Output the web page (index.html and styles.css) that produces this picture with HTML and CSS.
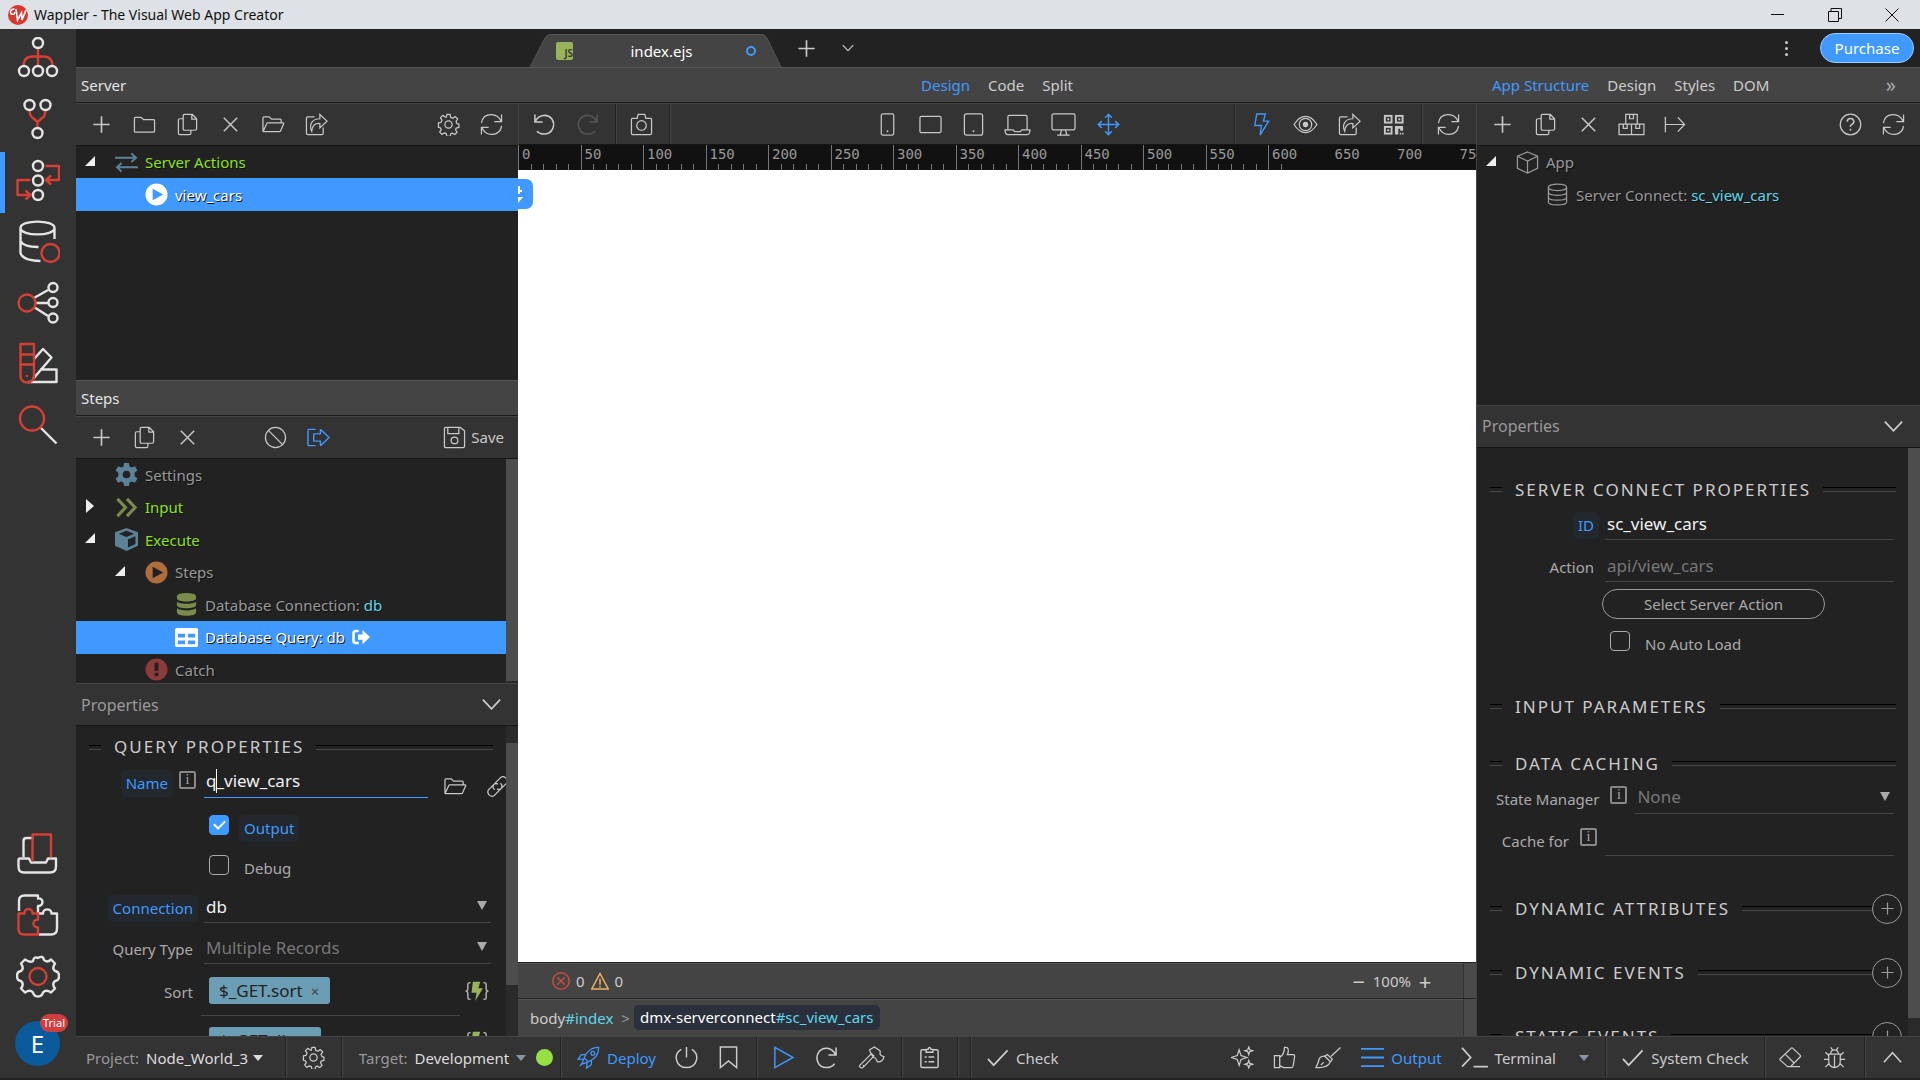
FILE: index.html
```html
<!DOCTYPE html>
<html lang="en">
<head>
<meta charset="utf-8">
<title>Wappler - The Visual Web App Creator</title>
<link rel="stylesheet" href="styles.css">
</head>
<body>
<svg class="defs" aria-hidden="true">
  <symbol id="plus" viewBox="0 0 24 24"><path d="M12 3.500v17M3.500 12h17" stroke-width="1.700"/></symbol>
  <symbol id="x" viewBox="0 0 24 24"><path d="M5 5l14 14M19 5L5 19" stroke-width="1.500"/></symbol>
  <symbol id="folder" viewBox="0 0 24 24"><path d="M1.500 19V5.500q0-1 1-1h6l2.500 2.500h10.500q1 0 1 1v11q0 1-1 1h-19q-1 0-1-1z"/></symbol>
  <symbol id="copy" viewBox="0 0 24 24"><path d="M9 1.500h8l4.500 4.500v10.500q0 1.500-1.500 1.500H9q-1.500 0-1.500-1.500V3Q7.500 1.500 9 1.500zM16.500 1.500v5h5M7.500 6H4Q2.500 6 2.500 7.500v13.500Q2.500 22.500 4 22.500h10q1.500 0 1.500-1.500v-3"/></symbol>
  <symbol id="open" viewBox="0 0 24 24"><path d="M1 19.500V5q0-1 1-1h5.500l2.500 2.500h9q1 0 1 1v3M1 19.500L5 11q.3-.7 1-.7h16q1 0 .6 1l-3.300 7.500q-.3.700-1.300.7H1"/></symbol>
  <symbol id="share" viewBox="0 0 24 24"><path d="M10 4H3Q1.500 4 1.500 5.500v15.500Q1.500 22.500 3 22.500h14.500q1.500 0 1.500-1.500v-6M15.500 1.500l7.500 7-7.500 7v-4.500c-5-.5-8 2-8.500 8C3.500 11.500 8 6 15.500 6z"/></symbol>
  <symbol id="gear" viewBox="0 0 24 24"><circle cx="12" cy="12" r="3.800"/><path d="M9.700 4.500L10.300 1.500h3.400l.6 3 2.300 1 2.600-1.700 2.400 2.400-1.700 2.600 1 2.300 2 .6v3.400l-3 .6-.5 1.800 1.500 2.700-2.400 2.300-2.600-1.500-1.600.7-.6 2.800h-3.400l-.6-3-1.900-.8-2.700 1.600-2.300-2.400 1.600-2.600-.8-1.900-2.100-.5V10.300l2.700-.6 1-2.200-1.600-2.700 2.400-2.300 2.700 1.700z" stroke-linejoin="round"/></symbol>
  <symbol id="sync" viewBox="0 0 24 24"><path d="M1.500 10.500C3 -.5 17.500-1.500 22 8.500M22.500 1.500v7.500H15M22.500 13.500C21 24.500 6.500 25.500 2 15.500M1.500 22.500V15H9"/></symbol>
  <symbol id="undo" viewBox="0 0 24 24"><path d="M2 1.500v8h8M2.200 9C6 1.500 15 .5 19.500 6c4.500 6 1 16-8 16-3 0-5.500-1-7.500-3" stroke-width="1.600"/></symbol>
  <symbol id="redo" viewBox="0 0 24 24"><path d="M22 1.500v8h-8M21.800 9C18 1.500 9 .5 4.500 6c-4.500 6-1 16 8 16 3 0 5.500-1 7.500-3" stroke-width="1.600"/></symbol>
  <symbol id="camera" viewBox="0 0 24 24"><path d="M2.500 5.500h5l1-4h7l1 4h5q1 0 1 1V21q0 1.500-1.500 1.500H3q-1.500 0-1.500-1.500V6.500q0-1 1-1z"/><circle cx="12" cy="13" r="5"/></symbol>
  <symbol id="phone" viewBox="0 0 24 24"><rect x="5.500" y="1" width="13" height="22" rx="1.500"/><circle cx="12" cy="19" r="1" class="dot"/></symbol>
  <symbol id="landscape" viewBox="0 0 24 24"><rect x="1" y="3.500" width="22" height="17" rx="1.500"/></symbol>
  <symbol id="tablet" viewBox="0 0 24 24"><rect x="2.500" y="1" width="19" height="22" rx="2"/><circle cx="12" cy="19" r="1" class="dot"/></symbol>
  <symbol id="laptop" viewBox="0 0 28 24"><path d="M4 17V4q0-1.500 1.500-1.500h17Q24 2.500 24 4v13M1 17.500h8.500l1.500 2h6l1.500-2H27q0 5-3 5H4q-3 0-3-5z"/></symbol>
  <symbol id="monitor" viewBox="0 0 26 24"><rect x="1" y="1" width="24" height="16.500" rx="1.500"/><path d="M11 17.500L9.500 23M15 17.500l1.500 5.500M6.500 23h13"/></symbol>
  <symbol id="move" viewBox="0 0 24 24"><path d="M12 1.500v21M1.500 12h21M8.500 5L12 1.300 15.500 5M8.500 19l3.500 3.700 3.500-3.700M5 8.500L1.300 12 5 15.500M19 8.500l3.700 3.500-3.700 3.500" stroke-width="1.500"/></symbol>
  <symbol id="bolt" viewBox="0 0 24 24"><path d="M7 1h9l-2 7.500h5.500L10.500 23l1.500-10H5z" stroke-width="1.400"/></symbol>
  <symbol id="eye" viewBox="0 0 26 24"><path d="M1 12Q6.500 3.500 13 3.500T25 12q-5.500 8.500-12 8.500T1 12z"/><circle cx="13" cy="12" r="6.500"/><circle cx="13" cy="12" r="2.800" class="dot"/></symbol>
  <symbol id="qr" viewBox="0 0 24 24"><g stroke-width="2"><rect x="3" y="3" width="7" height="7"/><rect x="14.500" y="3" width="7" height="7"/><rect x="3" y="14.500" width="7" height="7"/></g><path d="M6.500 5.500v2M18 5.500v2M6.500 17v2" stroke-width="2"/><path class="dot" d="M13.500 13.500h8.500v5h-3v-2h-2v6h-3.500zM18.500 20.500h1.500v2h-1.500zM21 20.500h1.500v2H21z"/></symbol>
  <symbol id="boxes" viewBox="0 0 28 24"><path d="M8 1.500h12v10H8zM1 11.500h26v11H1zM14 11.500v11M12 1.500v4.500h4V1.500M5.500 11.500V16h4v-4.500M18.500 11.500V16h4v-4.500"/></symbol>
  <symbol id="into" viewBox="0 0 24 24"><path d="M2.500 4v16M3 12h19M15.500 4.500L22.500 12l-7 7.500"/></symbol>
  <symbol id="help" viewBox="0 0 24 24"><circle cx="12" cy="12" r="10.700"/><path d="M8.500 9q.3-3.300 3.500-3.300T15.500 9q0 1.700-2 2.800T12 14.500" stroke-width="1.600"/><circle cx="12" cy="17.500" r="1" class="dot"/></symbol>
  <symbol id="ban" viewBox="0 0 24 24"><circle cx="12" cy="12" r="10.500"/><path d="M4.600 4.600l14.800 14.800"/></symbol>
  <symbol id="exit" viewBox="0 0 24 24"><path d="M9 3.500H2q-1 0-1 1v15q0 1 1 1h7M7 9q0-.8.800-.8H14V4.500q0-1 .8-.4L23 12l-8.200 8q-.8.600-.8-.4v-3.800H7.800Q7 15.800 7 15z" stroke-width="1.500"/></symbol>
  <symbol id="save" viewBox="0 0 24 24"><path d="M3 1.500h15L22.500 5v16q0 1.500-1.500 1.500H3Q1.500 22.500 1.500 21V3Q1.500 1.500 3 1.500zM5 1.500V8h11.500V1.500"/><circle cx="12" cy="15" r="3.500"/></symbol>
  <symbol id="swap" viewBox="0 0 24 24"><path d="M0 7h21M17 2.500L22 7l-5 4.500M24 17H3M7 12.500L2 17l5 4.500" stroke-width="2"/></symbol>
  <symbol id="play-disc" viewBox="0 0 24 24"><path class="solid" fill-rule="evenodd" d="M12 .5a11.500 11.500 0 100 23 11.500 11.500 0 000-23zM8 6l11 6-11 6z"/></symbol>
  <symbol id="gear-solid" viewBox="0 0 24 24"><path class="solid" fill-rule="evenodd" d="M9.500 0h5l.7 3.600 2.200 1.200 3.400-1.300 2.600 4.300-2.900 2.400v3.600l2.900 2.400-2.600 4.300-3.400-1.300-2.200 1.200-.7 3.600h-5l-.7-3.600-2.200-1.200-3.400 1.300L.6 16.200l2.900-2.400v-3.600L.6 7.800l2.600-4.300 3.400 1.300 2.200-1.200zM12 8a4 4 0 100 8 4 4 0 000-8z"/></symbol>
  <symbol id="chevrons" viewBox="0 0 24 24"><path d="M2.500 3l8.500 9-8.500 9M12.500 3l8.500 9-8.500 9" stroke-width="3.200"/></symbol>
  <symbol id="cube-solid" viewBox="0 0 24 24"><path class="solid" fill-rule="evenodd" d="M12 0l12 4.500v14L12 24 0 18.500v-14zM12 2.800L4 6l8 3.300L20 6zM13.500 12v8.300l7.800-3.500V8.700z"/></symbol>
  <symbol id="db-solid" viewBox="0 0 24 24"><path class="solid" d="M2 3.500C2-1 22-1 22 3.500v2C22 10 2 10 2 5.500zM2 9c4 3 16 3 20 0v3.500c0 4.500-20 4.500-20 0zM2 16c4 3 16 3 20 0v4c0 5-20 5-20 0z"/></symbol>
  <symbol id="table" viewBox="0 0 24 24"><path class="solid" fill-rule="evenodd" d="M2 2h20q2 0 2 2v16q0 2-2 2H2q-2 0-2-2V4q0-2 2-2zM3 8v4h7.500V8zM13.500 8v4H21V8zM3 15v4h7.500v-4zM13.500 15v4H21v-4z"/></symbol>
  <symbol id="alert" viewBox="0 0 24 24"><path class="solid" fill-rule="evenodd" d="M12 .5a11.500 11.500 0 100 23 11.500 11.500 0 000-23zM10 5h4v8.500h-4zM10 15.500h4v3.500h-4z"/></symbol>
  <symbol id="out-solid" viewBox="0 0 24 24"><path d="M9 4H5Q2 4 2 7v10q0 3 3 3h4" stroke-width="3.500"/><path class="solid" d="M8 8.500h6V2.500L24 12l-10 9.500v-6H8z"/></symbol>
  <symbol id="cube" viewBox="0 0 24 24"><path d="M12 1l10.500 4.500v12.500L12 23 1.500 18V5.500zM1.500 5.500L12 10.500l10.500-5M12 10.500V23"/></symbol>
  <symbol id="db" viewBox="0 0 24 24"><path d="M2.500 4.500C2.500 0 21.500 0 21.500 4.500S2.500 9 2.500 4.500v15C2.500 24 21.500 24 21.500 19.500v-15M2.500 9.500C2.500 14 21.500 14 21.500 9.500M2.500 14.500c0 4.500 19 4.500 19 0"/></symbol>
  <symbol id="chev-down" viewBox="0 0 24 24"><path d="M3 7l9 9.500L21 7" stroke-width="1.800"/></symbol>
  <symbol id="chev-up" viewBox="0 0 24 24"><path d="M3 17l9-10 9 10" stroke-width="1.600"/></symbol>
  <symbol id="link" viewBox="0 0 24 24"><path d="M9 15.500c-2.500-2-2-4.500 0-6.500L15 3q2.500-2.500 5.500 0 3 3 .5 6l-5 5q-2 2-4.500.5M15 8.500c2.500 2 2 4.500 0 6.500l-6 6q-2.500 2.500-5.500 0-3-3-.5-6l5-5q2-2 4.500-.5"/></symbol>
  <symbol id="brace-bolt" viewBox="0 0 28 24"><path d="M7 3H5.500Q4 3 4 5v4.500Q4 12 1.500 12 4 12 4 14.500V19q0 2 1.500 2H7M21 3h1.500Q24 3 24 5v4.500q0 2.500 2.500 2.500Q24 12 24 14.500V19q0 2-1.500 2H21" stroke="#aaa" stroke-width="1.700"/><path d="M9.500 2h8l-2 7h5L12 23l1.500-9H8z" fill="#98b35a"/></symbol>
  <symbol id="rocket" viewBox="0 0 24 24"><path d="M7.500 12.500Q12 1 22.500 1.500 23 12 11.500 16.500zM9 9H4.500L1 14l6-.5M15 15v4.500L10 23l.5-6M7 13.500L5 19l5.500-2M6 17l-3 4"/><circle cx="16.500" cy="7.500" r="2"/></symbol>
  <symbol id="power" viewBox="0 0 24 24"><path d="M12 1v11M6.500 3.500C-2.500 9 1 22.500 12 22.500S26.500 9 17.500 3.500" stroke-width="1.500"/></symbol>
  <symbol id="bookmark" viewBox="0 0 24 24"><path d="M3.500 1h17v21.500L12 15.500l-8.500 7z" stroke-width="1.500"/></symbol>
  <symbol id="play" viewBox="0 0 24 24"><path d="M3 1.500L22 12 3 22.500z" stroke-width="1.500"/></symbol>
  <symbol id="reload" viewBox="0 0 24 24"><path d="M22 1.500v8h-8M21.500 9C17 1 9 .5 4.500 5.500-.5 12 2.500 22.500 12 22.500q5.500 0 8.500-4" stroke-width="1.600"/></symbol>
  <symbol id="tools" viewBox="0 0 28 24"><path d="M2 20L14 8l2.500 2.500L5 22.500q-1.500 1-3-.5-1-1 0-2zM13 7l-1-3 5-3 6 4v4q2 2 4 2-1 6-7 5.500Q19 12 16 12zM5 21l1-1"/></symbol>
  <symbol id="clipboard" viewBox="0 0 24 24"><path d="M8.500 4H4.500q-1.500 0-1.500 1.500V21q0 1.500 1.500 1.500h15q1.500 0 1.500-1.500V5.500Q21 4 19.500 4h-4M8.500 6.500V3.500h2Q12-.5 13.500 3.500h2v3zM7 11.500h2M11 11.500h6M7 16.500h2M11 16.500h6" stroke-width="1.500"/></symbol>
  <symbol id="check" viewBox="0 0 24 24"><path d="M2 13.500l6 6.500L22.500 4.500" stroke-width="1.800"/></symbol>
  <symbol id="sparkles" viewBox="0 0 24 24"><path d="M8.500 4l2 6 6 2-6 2-2 6-2-6-6-2 6-2zM18.500 1l1 3 3 1-3 1-1 3-1-3-3-1 3-1zM18.500 15l1 3 3 1-3 1-1 3-1-3-3-1 3-1z"/></symbol>
  <symbol id="thumb" viewBox="0 0 24 24"><path d="M1.500 10H7v12.500H1.500zM7 12q5-3.500 5-10.500 4-1 4 3.500 0 2-1 4h6q2 0 1.500 2.500L21 21q-.5 1.500-2 1.500h-8L7 20.500"/></symbol>
  <symbol id="brush" viewBox="0 0 28 24"><path d="M26.500 1.500L16.500 11M13 9l5 5-2 2.500-6-6zM10.500 10.500Q4 10 3.500 16.500L1 22.500q12 1 15-6M6 20l3-3"/></symbol>
  <symbol id="lines" viewBox="0 0 24 24"><path d="M0 3h24M0 12h24M0 21h24" stroke-width="2"/></symbol>
  <symbol id="prompt" viewBox="0 0 28 24"><path d="M1 2l9 10-9 9.500M13 21.500h15" stroke-width="1.800"/></symbol>
  <symbol id="eraser" viewBox="0 0 24 24"><path d="M9 21.500L1.500 15q-1-1 0-2L12.500 2.500q1-1 2 0l7.500 7q1 1 0 2L12 21.500zM6.500 8.500l9.500 9.500M8 21.500h14"/></symbol>
  <symbol id="bug" viewBox="0 0 24 24"><path d="M6 8.500h12V16q0 6-6 6.500Q6 22 6 16zM8 8.500Q8 4 12 4t4 4.500M12 10v12M8 1.500l2 2.500M16 1.500L14 4M1 14h5M18 14h5M2.500 6.500L6 10M21.500 6.500L18 10M2.500 22L6 18.500M21.500 22L18 18.500"/></symbol>
  <symbol id="error" viewBox="0 0 24 24"><circle cx="12" cy="12" r="11"/><path d="M7 7l10 10M17 7L7 17"/></symbol>
  <symbol id="warn" viewBox="0 0 24 24"><path d="M12 2L23 22.500H1zM12 9v8M12 18.500v2" stroke-width="2"/></symbol>
  <symbol id="twist-open" viewBox="0 0 10 10"><path d="M10 0v10H0z" fill="#eee" stroke="none"/></symbol>
  <symbol id="twist-closed" viewBox="0 0 10 14"><path d="M1 0l8 7-8 7z" fill="#eee" stroke="none"/></symbol>
</svg>

<header class="titlebar">
  <svg class="logo" viewBox="0 0 20 20"><circle cx="10" cy="10" r="10" fill="#d8392f"/><path d="M6.500 4q-4 0-4 3t3.500 2l1-2M8 4l1.500 11 4-7 .5 7L18 5" fill="none" stroke="#fff" stroke-width="1.600"/></svg>
  <h1>Wappler - The Visual Web App Creator</h1>
  <div class="window-buttons">
    <button aria-label="Minimize"><svg viewBox="0 0 14 14"><path d="M0 6.500h13"/></svg></button>
    <button aria-label="Restore"><svg viewBox="0 0 14 14"><path d="M.5 3.500h10v10H.5zM3 3V.5h10.500v10H11"/></svg></button>
    <button aria-label="Close"><svg viewBox="0 0 14 14"><path d="M.5.5l13 13M13.500.5l-13 13"/></svg></button>
  </div>
</header>

<div class="workspace">
  <nav class="rail" aria-label="Managers">
    <a href="#app"><svg viewBox="0 0 44 44"><g class="red"><path d="M22 9.500v20M7.500 29.500q0-10 9-10h11q9 0 9 10"/></g><circle cx="22" cy="6" r="5"/><circle cx="8" cy="34" r="5"/><circle cx="22" cy="34" r="5"/><circle cx="36" cy="34" r="5"/></svg></a>
    <a href="#git"><svg viewBox="0 0 44 44"><path class="red" d="M13.500 12q0 6 4 8.500l4 3.500v7M29.500 12q0 6-4 8.500l-4 3.500"/><circle cx="13.500" cy="7" r="5"/><circle cx="29.500" cy="7" r="5"/><circle cx="21.500" cy="35" r="5"/></svg></a>
    <a href="#server" class="current"><svg viewBox="0 0 44 44"><path class="red" d="M29.500 7H43v14H30.500M35 16.500l-5 4.500 5 4.500M14.500 21H1.500v15H14M9.500 31.500l5 4.500-5 4.500"/><circle cx="22" cy="7" r="5"/><circle cx="22" cy="21.500" r="5"/><circle cx="22" cy="36" r="5"/></svg></a>
    <a href="#database"><svg viewBox="0 0 44 44"><path d="M4.500 8C4.500-.5 38.500-.5 38.500 8S4.500 16.500 4.500 8zM4.500 8v25q2 7.500 20 8M38.500 8v11M4.500 21q3 6 18 6"/><circle class="red" cx="34.500" cy="33" r="9"/></svg></a>
    <a href="#api"><svg viewBox="0 0 44 44"><path d="M18 17l14-8M19.500 22H32M18 26l14 9"/><circle cx="37" cy="6.500" r="4.500"/><circle cx="37" cy="21.500" r="4.500"/><circle cx="37" cy="37" r="4.500"/><circle class="red" cx="11" cy="22" r="8.500"/></svg></a>
    <a href="#theme"><svg viewBox="0 0 44 44"><path d="M18 17l9-10 8.500 8.500L17 37M24 27.500h16.500v12.500H12"/><path class="red" d="M4.500 2H18v32q0 6-7 6.500-6.500-.5-6.500-6.500zM4.500 12.500H18M4.500 22.500H18M11 33v2"/></svg></a>
    <a href="#find"><svg viewBox="0 0 44 44"><path d="M25 25l15.500 15.500"/><circle class="red" cx="16" cy="15.500" r="12"/></svg></a>
    <span class="rail-space"></span>
    <a href="#assets"><svg viewBox="0 0 44 44"><path d="M7.500 25V9q0-3 3-3h7M4 26.500h9l2 4h15l2-4h8v8q0 6-6 6H8q-5.500 0-5.500-6v-6.500q0-1.500 1.500-1.500z"/><path class="red" d="M16.500 29.500V2.500H35v23"/></svg></a>
    <a href="#extensions"><svg viewBox="0 0 44 44"><path d="M3 18V8q0-5.500 5.500-5.500H22v3c6-1 6 8 0 7.500v7M22 20.500h5c0-5.500 8.500-5.500 8.500 0h5.500v15q0 6-6 6H23"/><path class="red" d="M2.500 20.500h6c0-6 8-6 8 0H22v6c-6 0-6 8 0 8v7H8q-5.500 0-5.500-6z"/></svg></a>
    <a href="#settings"><svg viewBox="0 0 44 44"><path d="M17 7q1-5 5-3 5-3 6 2 3 3 7-.5l4 4q-3.500 5 0 7.500 4 .5 4 5t-4 5q-3.500 3 0 7.500l-4 4q-5-3.500-8 0-1 4-5 4t-5-4q-3-3.500-8 0l-4-4q3.500-4.500 0-7.500-4-.5-4-5t4-5q3.500-2.500 0-7.500l4-4Q14 9 17 7z"/><circle class="red" cx="22" cy="22.500" r="8.500"/></svg></a>
    <button class="account" aria-label="Account"><span class="avatar">E</span><span class="trial">Trial</span></button>
  </nav>

  <main class="main">
    <div class="tabbar">
      <div class="tab">
        <svg class="tab-shape" viewBox="0 0 252 33" preserveAspectRatio="none"><path d="M0 33L15 4q2-3.500 5-3.500h212q3 0 5 3.500l14 29" fill="#444" stroke="#555"/></svg>
        <span class="js-badge">JS</span><span class="tab-name">index.ejs</span><span class="unsaved"></span>
      </div>
      <button class="icon-btn tab-add" aria-label="New tab"><svg class="ico"><use href="#plus"/></svg></button>
      <button class="icon-btn tab-more" aria-label="All tabs"><svg class="ico"><use href="#chev-down"/></svg></button>
      <button class="icon-btn kebab" aria-label="More"><i></i><i></i><i></i></button>
      <button class="purchase">Purchase</button>
    </div>

    <div class="modebar">
      <h2>Server</h2>
      <nav class="modes"><a href="#design" class="on">Design</a><a href="#code">Code</a><a href="#split">Split</a></nav>
      <nav class="modes side"><a href="#structure" class="on">App Structure</a><a href="#d">Design</a><a href="#styles">Styles</a><a href="#dom">DOM</a><button class="more" aria-label="More panels">»</button></nav>
    </div>

    <div class="columns">
      <section class="left">
        <div class="toolbar">
          <button aria-label="Add"><svg class="ico"><use href="#plus"/></svg></button>
          <button aria-label="New folder"><svg class="ico"><use href="#folder"/></svg></button>
          <button aria-label="Copy"><svg class="ico"><use href="#copy"/></svg></button>
          <button aria-label="Delete"><svg class="ico"><use href="#x"/></svg></button>
          <button aria-label="Open"><svg class="ico wide"><use href="#open"/></svg></button>
          <button aria-label="Share"><svg class="ico wide"><use href="#share"/></svg></button>
          <span class="grow"></span>
          <button aria-label="Settings"><svg class="ico"><use href="#gear"/></svg></button>
          <button aria-label="Refresh"><svg class="ico"><use href="#sync"/></svg></button>
        </div>
        <ul class="tree actions-tree">
          <li><span class="twist"><svg><use href="#twist-open"/></svg></span><svg class="ico teal"><use href="#swap"/></svg><span class="green">Server Actions</span></li>
          <li class="l2 selected"><span class="twist"></span><svg class="ico"><use href="#play-disc"/></svg><span>view_cars</span><span class="handle"><svg viewBox="0 0 15 30"><path d="M0 12h4M1 7v8" stroke="#fff" stroke-width="2"/><path d="M0 18h5l-5 6z" fill="#fff"/></svg></span></li>
        </ul>
        <h2 class="steps-title">Steps</h2>
        <div class="toolbar">
          <button aria-label="Add step"><svg class="ico"><use href="#plus"/></svg></button>
          <button aria-label="Copy step"><svg class="ico"><use href="#copy"/></svg></button>
          <button aria-label="Delete step"><svg class="ico"><use href="#x"/></svg></button>
          <span class="gap"></span>
          <button aria-label="Disable"><svg class="ico"><use href="#ban"/></svg></button>
          <button aria-label="Output" class="on"><svg class="ico"><use href="#exit"/></svg></button>
          <span class="grow"></span>
          <button class="save"><svg class="ico"><use href="#save"/></svg>Save</button>
        </div>
        <div class="scroll steps">
          <ul class="tree">
            <li><span class="twist"></span><svg class="ico teal"><use href="#gear-solid"/></svg><span>Settings</span></li>
            <li><span class="twist"><svg class="tall"><use href="#twist-closed"/></svg></span><svg class="ico olive"><use href="#chevrons"/></svg><span class="green">Input</span></li>
            <li><span class="twist"><svg><use href="#twist-open"/></svg></span><svg class="ico teal"><use href="#cube-solid"/></svg><span class="green">Execute</span></li>
            <li class="l2"><span class="twist"><svg><use href="#twist-open"/></svg></span><svg class="ico orange"><use href="#play-disc"/></svg><span>Steps</span></li>
            <li class="l3"><span class="twist"></span><svg class="ico olive"><use href="#db-solid"/></svg><span>Database Connection: <b>db</b></span></li>
            <li class="l3 selected"><span class="twist"></span><svg class="ico"><use href="#table"/></svg><span>Database Query: db</span><svg class="ico small"><use href="#out-solid"/></svg></li>
            <li class="l2"><span class="twist"></span><svg class="ico crimson"><use href="#alert"/></svg><span>Catch</span></li>
          </ul>
          <div class="track"><span class="thumb-steps"></span></div>
        </div>
        <div class="props-head"><h2>Properties</h2><button class="icon-btn" aria-label="Collapse"><svg class="ico"><use href="#chev-down"/></svg></button></div>
        <div class="scroll query">
          <form class="props">
            <h3>Query Properties</h3>
            <div class="row name-row"><div class="lab"><label class="hl" for="qname">Name</label><span class="info">i</span></div><div class="field with-caret"><input id="qname" type="text" value="q_view_cars"><i class="caret"></i></div><div class="row-tools"><button type="button" aria-label="Browse"><svg class="ico"><use href="#open"/></svg></button><button type="button" aria-label="Link"><svg class="ico"><use href="#link"/></svg></button></div></div>
            <div class="check-row first"><input type="checkbox" id="out" checked><label class="hl" for="out">Output</label></div>
            <div class="check-row"><input type="checkbox" id="debug"><label for="debug">Debug</label></div>
            <div class="row"><div class="lab"><label class="hl" for="conn">Connection</label></div><div class="field pick"><select id="conn"><option>db</option></select></div></div>
            <div class="row"><div class="lab"><label for="qtype">Query Type</label></div><div class="field pick dim"><select id="qtype"><option>Multiple Records</option></select></div></div>
            <div class="row chip-row"><div class="lab"><label>Sort</label></div><div class="chip-field"><span class="chip">$_GET.sort<button type="button" aria-label="Remove sort">×</button></span></div><button type="button" class="bind" aria-label="Bind sort"><svg><use href="#brace-bolt"/></svg></button></div>
            <div class="row chip-row"><div class="lab"><label>Direction</label></div><div class="chip-field"><span class="chip">$_GET.dir<button type="button" aria-label="Remove direction">×</button></span></div><button type="button" class="bind" aria-label="Bind direction"><svg><use href="#brace-bolt"/></svg></button></div>
          </form>
          <div class="track"><span class="thumb-query"></span></div>
        </div>
      </section>

      <section class="center">
        <div class="toolbar center-tools">
          <div class="tg-left"><div class="tg"><button aria-label="Undo"><svg class="ico"><use href="#undo"/></svg></button><button aria-label="Redo" class="off"><svg class="ico"><use href="#redo"/></svg></button></div><div class="tg"><button aria-label="Screenshot"><svg class="ico"><use href="#camera"/></svg></button></div></div>
          <div class="devices"><button aria-label="Phone"><svg class="ico"><use href="#phone"/></svg></button><button aria-label="Phone landscape"><svg class="ico"><use href="#landscape"/></svg></button><button aria-label="Tablet"><svg class="ico"><use href="#tablet"/></svg></button><button aria-label="Laptop" class="big"><svg class="ico wide"><use href="#laptop"/></svg></button><button aria-label="Desktop" class="big"><svg class="ico wide"><use href="#monitor"/></svg></button><button aria-label="Fluid" class="on"><svg class="ico"><use href="#move"/></svg></button></div>
          <div class="tg-right"><div class="tg"><button aria-label="Live" class="on"><svg class="ico"><use href="#bolt"/></svg></button><button aria-label="Preview"><svg class="ico wide"><use href="#eye"/></svg></button><button aria-label="Open in browser"><svg class="ico wide"><use href="#share"/></svg></button><button aria-label="QR code"><svg class="ico"><use href="#qr"/></svg></button></div><div class="tg"><button aria-label="Reload"><svg class="ico"><use href="#sync"/></svg></button></div></div>
        </div>
        <div class="ruler">
          <svg class="ticks"><defs><pattern id="tick" width="125" height="25" patternUnits="userSpaceOnUse"><path d="M.5 0v25M63.500 0v25" stroke="#777"/><path d="M13.500 19v6M25.500 19v6M38.500 19v6M50.500 19v6M75.500 19v6M88.500 19v6M100.500 19v6M113.500 19v6" stroke="#777"/></pattern></defs><rect width="764" height="25" fill="url(#tick)"/></svg>
          <div class="marks"><span>0</span><span>50</span><span>100</span><span>150</span><span>200</span><span>250</span><span>300</span><span>350</span><span>400</span><span>450</span><span>500</span><span>550</span><span>600</span><span>650</span><span>700</span><span>750</span></div>
        </div>
        <div class="canvas"></div>
        <div class="infobar"><svg class="ico red-i"><use href="#error"/></svg><span>0</span><svg class="ico amber"><use href="#warn"/></svg><span>0</span><span class="grow"></span><button aria-label="Zoom out">−</button><span>100%</span><button aria-label="Zoom in">+</button><span class="cap"></span></div>
        <div class="infobar crumbs"><a href="#body">body<b>#index</b></a><span class="sep">&gt;</span><a href="#sc" class="pill">dmx-serverconnect<b>#sc_view_cars</b></a><span class="grow"></span><span class="cap"></span></div>
      </section>

      <section class="right">
        <div class="toolbar">
          <button aria-label="Add component"><svg class="ico"><use href="#plus"/></svg></button>
          <button aria-label="Copy component"><svg class="ico"><use href="#copy"/></svg></button>
          <button aria-label="Delete component"><svg class="ico"><use href="#x"/></svg></button>
          <button aria-label="Library"><svg class="ico wide"><use href="#boxes"/></svg></button>
          <button aria-label="Move into"><svg class="ico"><use href="#into"/></svg></button>
          <span class="grow"></span>
          <button aria-label="Help"><svg class="ico"><use href="#help"/></svg></button>
          <button aria-label="Refresh structure"><svg class="ico"><use href="#sync"/></svg></button>
        </div>
        <ul class="tree app-tree">
          <li><span class="twist"><svg><use href="#twist-open"/></svg></span><svg class="ico"><use href="#cube"/></svg><span>App</span></li>
          <li class="l2"><span class="twist"></span><svg class="ico"><use href="#db"/></svg><span>Server Connect: <b>sc_view_cars</b></span></li>
        </ul>
        <div class="props-head"><h2>Properties</h2><button class="icon-btn" aria-label="Collapse"><svg class="ico"><use href="#chev-down"/></svg></button></div>
        <div class="scroll connect">
          <form class="props">
            <h3>Server Connect Properties</h3>
            <div class="row tight"><div class="lab"><label class="hl" for="cid">ID</label></div><div class="field"><input id="cid" type="text" value="sc_view_cars"></div></div>
            <div class="row"><div class="lab"><label for="act">Action</label></div><div class="field dim"><input id="act" type="text" value="api/view_cars"></div></div>
            <button type="button" class="select-action">Select Server Action</button>
            <div class="check-row auto"><input type="checkbox" id="auto"><label for="auto">No Auto Load</label></div>
            <h3 class="far">Input Parameters</h3>
            <h3 class="near">Data Caching</h3>
            <div class="row tight"><div class="lab state"><label for="state">State Manager</label><span class="info">i</span></div><div class="field pick dim"><select id="state"><option>None</option></select></div></div>
            <div class="row"><div class="lab"><label for="cache">Cache for</label><span class="info">i</span></div><div class="field"><input id="cache" type="text"></div></div>
            <h3 class="add">Dynamic Attributes<button type="button" aria-label="Add attribute"><svg><use href="#plus"/></svg></button></h3>
            <h3 class="add">Dynamic Events<button type="button" aria-label="Add dynamic event"><svg><use href="#plus"/></svg></button></h3>
            <h3 class="add">Static Events<button type="button" aria-label="Add static event"><svg><use href="#plus"/></svg></button></h3>
          </form>
          <div class="track"><span class="thumb-connect"></span></div>
        </div>
      </section>
    </div>

    <footer class="status">
      <button class="g project"><span class="mute">Project:</span> <span class="strong">Node_World_3</span><i class="tri light"></i></button>
      <button class="g cog" aria-label="Project settings"><svg class="ico"><use href="#gear"/></svg></button>
      <button class="g target"><span class="mute">Target:</span> <span class="strong">Development</span><i class="tri"></i><i class="led"></i></button>
      <div class="g deploy"><button class="on"><svg class="ico"><use href="#rocket"/></svg>Deploy</button><button aria-label="Power"><svg class="ico"><use href="#power"/></svg></button><button aria-label="Bookmark"><svg class="ico"><use href="#bookmark"/></svg></button></div>
      <div class="g run"><button class="on" aria-label="Run"><svg class="ico"><use href="#play"/></svg></button><button aria-label="Restart"><svg class="ico"><use href="#reload"/></svg></button><button aria-label="Build"><svg class="ico wide"><use href="#tools"/></svg></button></div>
      <div class="g clip"><button aria-label="Tasks"><svg class="ico"><use href="#clipboard"/></svg></button></div>
      <div class="g thin"></div>
      <button class="chk"><svg class="ico"><use href="#check"/></svg>Check</button>
      <span class="grow"></span>
      <div class="g output"><button aria-label="AI"><svg class="ico"><use href="#sparkles"/></svg></button><button aria-label="Like"><svg class="ico"><use href="#thumb"/></svg></button><button aria-label="Theme"><svg class="ico wide"><use href="#brush"/></svg></button><button class="on"><svg class="ico"><use href="#lines"/></svg>Output</button><button class="term"><svg class="ico wide"><use href="#prompt"/></svg>Terminal<i class="tri"></i></button></div>
      <button class="g sys"><svg class="ico"><use href="#check"/></svg>System Check</button>
      <div class="g last"><button aria-label="Clear"><svg class="ico"><use href="#eraser"/></svg></button><button aria-label="Debug"><svg class="ico"><use href="#bug"/></svg></button></div>
      <button class="up" aria-label="Expand"><svg class="ico"><use href="#chev-up"/></svg></button>
    </footer>
  </main>
</div>
</body>
</html>
```
FILE: styles.css
```css
* { box-sizing: border-box; }
body {
  margin: 0;
  height: 100vh;
  display: flex;
  flex-direction: column;
  overflow: hidden;
  padding-bottom: 2px;
  background: #222;
  color: #ccc;
  font: 15px/20px "Noto Sans", sans-serif;
}
h1, h2, h3, ul { margin: 0; padding: 0; font-size: 15px; font-weight: 400; list-style: none; }
button, input, select { font: inherit; color: inherit; background: none; border: 0; padding: 0; margin: 0; outline: 0; }
button { display: flex; align-items: center; justify-content: center; flex: none; }
a { color: inherit; text-decoration: none; }
b { font-weight: 400; color: #5fd7e8; }
.defs { position: absolute; width: 0; height: 0; }
.ico { width: 23px; height: 23px; flex: none; fill: none; stroke: currentColor; stroke-width: 1.300; }
.ico.wide { width: 27px; }
.dot, .solid { fill: currentColor; stroke: none; }
.on { color: #4099ff; }
.off { color: #555; }
.grow { flex: 1; }

/* Title bar */
.titlebar { height: 29px; flex: none; display: flex; align-items: center; background: #dee1e5; color: #111; padding-left: 8px; }
.logo { width: 20px; height: 20px; margin: 0 6px 0 0; }
.titlebar h1 { flex: 1; font-size: 14px; }
.window-buttons { display: flex; }
.window-buttons button { width: 57px; height: 27px; }
.window-buttons svg { width: 14px; height: 14px; fill: none; stroke: #111; }

.workspace { flex: 1; min-height: 0; display: flex; }

/* Manager rail */
.rail { width: 76px; flex: none; background: #333; display: flex; flex-direction: column; padding: 1px 0 6px; }
.rail a { height: 61px; flex: none; display: flex; align-items: center; justify-content: center; border-left: 5px solid transparent; padding-right: 5px; padding-bottom: 4px; }
.rail a.current { border-left: 5px solid #4099ff; }
.rail a svg { width: 44px; height: 44px; fill: none; stroke: #e4e4e4; stroke-width: 2.400; stroke-linejoin: round; }
.rail .red { stroke: #d63f33; }
.rail-space { flex: 1; }
.account { position: relative; height: 64px; width: 75px; }
.avatar { width: 45px; height: 45px; border-radius: 50%; background: #0a5a9c; color: #fff; font-size: 24px; line-height: 45px; margin-top: 6px; }
.trial { position: absolute; top: 6px; left: 40px; width: 28px; height: 18px; border-radius: 9px; background: #d13e3e; color: #fff; font-size: 11px; line-height: 18px; }

/* Document tabs */
.main { flex: 1; min-width: 0; display: flex; flex-direction: column; }
.tabbar { height: 38px; flex: none; display: flex; align-items: center; padding: 0 6px 0 454px; }
.tab { position: relative; width: 252px; height: 33px; align-self: flex-end; display: flex; align-items: center; padding: 0 26px; color: #fff; }
.tab > * { position: relative; }
.tab .tab-shape { position: absolute; inset: 0; width: 100%; height: 100%; }
.js-badge { width: 17px; height: 18px; border-radius: 2px; background: #98b35a; color: #333; font-size: 10px; line-height: 22px; font-weight: 600; text-align: right; }
.tab-name { flex: 1; text-align: center; padding-left: 4px; }
.unsaved { width: 10px; height: 10px; border: 2px solid #4099ff; border-radius: 50%; }
.icon-btn { color: #ccc; }
.tab-add { margin-left: 13px; }
.tab-more { margin-left: 23px; }
.tab-more .ico { width: 14px; height: 14px; stroke-width: 2; }
.kebab { margin-left: auto; flex-direction: column; gap: 3px; width: 20px; }
.kebab i { width: 3px; height: 3px; background: #ccc; border-radius: 50%; }
.purchase { width: 94px; height: 30px; margin-left: 24px; border: 1px solid #9cf; border-radius: 15px; background: #4099ff; color: #fff; }

/* Mode bar */
.modebar { height: 36px; flex: none; display: grid; grid-template-columns: 442px 1fr 444px; align-items: center; background: #444; border-top: 1px solid #555; border-bottom: 1px solid #1a1a1a; }
.modebar h2, .steps-title { padding-left: 5px; color: #e4e4e4; }
.modes { display: flex; justify-content: center; gap: 18px; }
.modes.side { justify-content: flex-start; padding: 0 24px 0 16px; }
.more { margin-left: auto; font-size: 20px; color: #aaa; }

.columns { flex: 1; min-height: 0; display: grid; grid-template-columns: 442px 1fr 444px; }
.left, .center, .right { display: flex; flex-direction: column; min-width: 0; min-height: 0; }
.right { border-left: 1px solid #444; }

/* Toolbars */
.toolbar { height: 43px; flex: none; display: flex; align-items: center; padding: 0 5px 0 4px; background: #333; border-top: 1px solid #444; border-bottom: 1px solid #151515; color: #c8c8c8; }
.toolbar button { width: 43px; height: 100%; }
.toolbar .gap { width: 45px; }
.toolbar .on, .status .on { color: #4099ff; }
.toolbar .off { color: #555; }
.toolbar .save { width: auto; gap: 5px; padding-right: 9px; }
.center-tools { height: 42px; padding: 0; display: grid; grid-template-columns: 1fr auto 1fr; align-items: stretch; border-left: 1px solid #444; }
.tg-left, .tg-right, .devices, .tg { display: flex; }
.tg-right { justify-content: flex-end; }
.tg-left .tg { padding: 0 6px 0 4px; border-right: 1px solid #222; box-shadow: 1px 0 #444; }
.tg-right .tg { padding: 0 6px 0 4px; border-left: 1px solid #222; box-shadow: inset 1px 0 #444; }
.tg-right button { width: 44px; }
.devices .big { width: 46px; }

/* Trees */
.tree { color: #999; min-width: 0; }
.actions-tree { flex: 234 1 0; }
.app-tree { flex: 259 1 0; }
.tree li { position: relative; height: 32px; display: flex; align-items: center; gap: 7px; padding-left: 9px; white-space: nowrap; }
.tree li:nth-child(even) { height: 33px; }
.tree li span { text-shadow: 1px 1px #111; }
.tree .l2 { padding-left: 39px; }
.tree .l3 { padding-left: 69px; }
.twist { width: 23px; display: flex; padding-bottom: 3px; }
.twist svg { width: 10px; height: 10px; }
.twist .tall { height: 14px; }
.tree .selected { background: #4099ff; color: #fff; }
.tree .small { width: 18px; height: 18px; }
.green { color: #8fe01f; }
.teal { color: #5b8296; }
.olive { color: #7a8b4b; }
.orange { color: #ad6d3c; }
.crimson { color: #8d3a3a; }
.handle { position: absolute; left: 100%; top: 1px; width: 15px; height: 30px; background: #4099ff; border-radius: 0 7px 7px 0; z-index: 1; }
.handle svg { display: block; width: 15px; height: 30px; fill: none; }

.steps-title { height: 36px; flex: none; line-height: 34px; background: #444; border-top: 1px solid #555; border-bottom: 1px solid #1a1a1a; }
.scroll { min-height: 0; display: flex; overflow: hidden; }
.steps { flex: 225 1 0; }
.steps .tree, .props { flex: 1; min-width: 0; }
.track { width: 12px; flex: none; display: flex; flex-direction: column; background: #2a2a2a; position: relative; }
.track span { background: #4d4d4d; flex: none; }
.thumb-steps { height: 99%; }
.thumb-query { height: 78%; margin-top: 17px; }
.thumb-connect { height: 97%; }

/* Property panels */
.props-head { height: 43px; flex: none; display: flex; align-items: center; justify-content: space-between; padding: 0 15px 0 5px; background: #333; border-top: 1px solid #444; border-bottom: 1px solid #151515; }
.props-head h2 { font-size: 16px; color: #999; }
.query { flex: 310 1 0; }
.connect { flex: 589 1 0; }
.props { padding: 8px 15px 0 0; color: #aaa; }
.connect .props { padding: 29px 14px 0 0; }
.props h3 { display: flex; align-items: center; height: 26px; margin: 0 0 0 13px; font-size: 17px; letter-spacing: 2px; text-transform: uppercase; color: #ccc; white-space: nowrap; }
.props h3::before, .props h3::after { content: ""; height: 3px; border-top: 1px solid #000; border-bottom: 1px solid #484848; }
.props h3::before { width: 12px; margin-right: 13px; }
.props h3::after { flex: 1; margin: 0 -2px 0 12px; }
.props h3.far { margin-top: 36px; }
.props h3.near { margin-top: 31px; }
.props h3.add { height: 30px; margin: 34px -8px 0 13px; }
.props .row + h3.add { margin-top: 38px; }
h3.add::after { order: 1; }
h3.add button { order: 2; width: 30px; height: 30px; border: 1px solid #999; border-radius: 50%; }
.connect h3.add::after { margin-right: 0; }
h3.add svg { width: 17px; height: 17px; stroke: #999; }
.row { display: flex; align-items: flex-end; gap: 6px; margin-top: 12px; }
.connect .row { margin-top: 13px; }
.lab { min-width: 122px; display: flex; align-items: center; justify-content: flex-end; gap: 6px; white-space: nowrap; }
.lab label, .check-row label { padding: 3px 5px 4px; border-radius: 5px; }
.lab .info:last-child { margin: 0 2px 8px 0; }
.lab.state { padding-left: 14px; }
.row > .lab { padding-bottom: 1px; }
label.hl { background: #22282d; color: #4099ff; }
.info { width: 17px; height: 18px; border: 2px solid #888; border-radius: 2px; color: #aaa; font: 14px/14px "Liberation Serif", serif; text-align: center; }
.field { position: relative; flex: 1; min-width: 0; height: 29px; border-bottom: 1px solid #444; color: #f2f2f2; font-size: 17px; }
.field input, .field select { display: block; width: 100%; height: 25px; padding: 0 2px; appearance: none; }
.field.dim { color: #777; }
.pick::after { content: ""; position: absolute; right: 4px; top: 7px; border: 5px solid transparent; border-top: 9px solid #aaa; border-bottom: 0; pointer-events: none; }
.name-row { margin-top: 3px; position: relative; padding-right: 63px; }
.name-row .field { height: 35px; border-bottom: 1px solid #4099ff; }
.name-row .field input { height: 34px; }
.caret { position: absolute; left: 12px; top: 6px; width: 1px; height: 24px; background: #fff; }
.row-tools { position: absolute; left: 368px; bottom: 0; display: flex; gap: 19px; color: #c8c8c8; }
.check-row { display: flex; align-items: flex-start; gap: 10px; height: 27px; margin: 13px 0 0 133px; }
.check-row.first { margin-top: 17px; }
.check-row input { appearance: none; width: 20px; height: 20px; border: 1px solid #aaa; border-radius: 4px; display: flex; align-items: center; justify-content: center; }
.check-row input:checked { background: #4099ff; border: 1px solid #4099ff; }
.check-row input:checked::after { content: ""; width: 5px; height: 9px; margin-bottom: 3px; border: solid #fff; border-width: 0 2px 2px 0; transform: rotate(45deg); }
.chip-row { align-items: flex-start; gap: 3px; margin-top: 13px; }
.chip-row + .chip-row { margin-top: 11px; }
.chip-row .lab { margin-top: 2px; }
.chip-field { flex: 1; height: 39px; padding-left: 8px; border-bottom: 1px solid #444; }
.chip { display: inline-flex; align-items: center; gap: 8px; height: 27px; padding: 0 11px 0 10px; border-radius: 3px; background: #6b9eb5; color: #222; font-size: 17px; }
.chip button { font-size: 15px; color: #444; }
.bind { width: 28px; margin-top: 3px; }
.bind svg { width: 28px; height: 22px; fill: none; }
.connect .row.tight { margin-top: 8px; }
.connect .check-row.auto { margin: 12px 0 0 133px; }
.select-action { width: 223px; height: 30px; margin: 7px 0 0 125px; border: 1px solid #999; border-radius: 15px; }

/* Design surface */
.ruler { position: relative; height: 25px; flex: none; overflow: hidden; background: #111; color: #999; }
.ticks { position: absolute; width: 764px; height: 25px; }
.marks { width: 1000px; display: grid; grid-template-columns: repeat(16, 1fr); font: 14px/18px "DejaVu Sans Mono", monospace; }
.marks span { padding-left: 4px; }
.canvas { flex: 1; background: #fff; }
.infobar { height: 36px; flex: none; display: flex; align-items: center; gap: 6px; padding-left: 34px; background: #444; border-top: 1px solid #222; box-shadow: inset 0 1px #555; }
.infobar .ico { width: 18px; height: 18px; stroke-width: 2; }
.infobar button { width: 16px; font-size: 22px; }
.infobar .cap { width: 13px; align-self: stretch; margin-left: 24px; border-left: 1px solid #333; background: #4a4a4a; }
.red-i { color: #c94a42; }
.amber { color: #eeb062; }
.crumbs { height: 38px; padding-left: 12px; gap: 4px; }
.crumbs .sep { color: #999; padding-left: 4px; }
.pill { padding: 2px 6px 3px; border-radius: 5px; background: #2a2f3c; color: #fff; }

/* Status bar */
.status { height: 42px; flex: none; display: flex; align-items: stretch; background: #333; border-top: 1px solid #444; color: #ccc; position: relative; }
.status > *, .status > * > button { height: 100%; }
.g { display: flex; align-items: center; border-right: 1px solid #222; box-shadow: 1px 0 #444; }
.status button { gap: 7px; }
.mute { color: #999; }
.strong { color: #ddd; }
.tri { border: 5px solid transparent; border-top: 6px solid #8995a5; border-bottom: 0; }
.tri.light { border-top: 6px solid #ddd; margin-left: -2px; }
.led { width: 17px; height: 17px; margin-left: 3px; border-radius: 50%; background: #96df45; }
.status .project { width: 210px; justify-content: flex-start; padding-left: 10px; }
.cog { width: 56px; }
.target { width: 219px; padding-left: 10px; }
.deploy { width: 196px; padding: 0 16px; justify-content: space-between; }
.run { width: 145px; padding: 0 16px 0 15px; justify-content: space-between; }
.clip { width: 56px; justify-content: center; }
.thin { width: 13px; }
.chk { padding-left: 15px; }
.output { gap: 19px; padding-right: 16px; }
.output .term .tri { margin-left: 16px; }
.sys { width: 159px; }
.last { width: 100px; justify-content: center; gap: 21px; padding-right: 4px; }
.up { width: 55px; }
```
